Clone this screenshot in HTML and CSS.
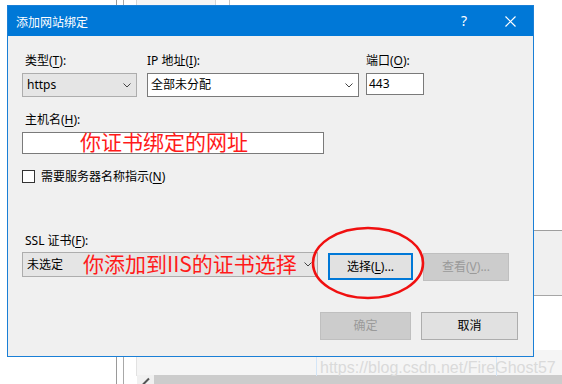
FILE: index.html
```html
<!DOCTYPE html>
<html lang="zh-CN">
<head>
<meta charset="utf-8">
<title>添加网站绑定</title>
<link rel="stylesheet" href="styles.css">
</head>
<body>
<div class="desk">
  <div class="bg-vline bg-v1"></div>
  <div class="bg-vline bg-v2"></div>
  <div class="bg-topbox"></div>
  <div class="bg-vline bg-v3"></div>
  <div class="bg-rightpanel"></div>
  <div class="bg-bottompanel"></div>
  <div class="bg-bottombar">
    <span class="pencil"><svg width="8" height="8" viewBox="0 0 8 8"><path d="M1 7.5 L7 1.5" stroke="#555" stroke-width="2" fill="none"/></svg></span>
    <span class="bar-fill"></span>
  </div>
  <div class="bg-sel bg-sel1"></div>
  <div class="bg-sel bg-sel2"></div>

  <section class="dialog">
    <header class="titlebar">
      <span class="title">添加网站绑定</span>
      <span class="tb-btn help">?</span>
      <span class="tb-btn close"><svg width="11" height="11" viewBox="0 0 11 11"><path d="M0.5 0.5 L10.5 10.5 M10.5 0.5 L0.5 10.5" stroke="#fff" stroke-width="1.2" fill="none"/></svg></span>
    </header>

    <div class="content">
      <div class="row-top">
        <div class="field f-type">
          <span class="lbl indent">类型(<u>T</u>):</span>
          <div class="select dropdown w-type"><span class="val">https</span><svg class="chev" width="8" height="5" viewBox="0 0 8 5"><path d="M0.5 0.5 L4 4 L7.5 0.5" stroke="#444" stroke-width="1" fill="none"/></svg></div>
        </div>
        <div class="field f-ip">
          <span class="lbl">IP 地址(<u>I</u>):</span>
          <div class="select combo w-ip"><span class="val">全部未分配</span><svg class="chev" width="8" height="5" viewBox="0 0 8 5"><path d="M0.5 0.5 L4 4 L7.5 0.5" stroke="#444" stroke-width="1" fill="none"/></svg></div>
        </div>
        <div class="field f-port">
          <span class="lbl">端口(<u>O</u>):</span>
          <div class="textbox w-port">443</div>
        </div>
      </div>

      <div class="field f-host">
        <span class="lbl indent">主机名(<u>H</u>):</span>
        <div class="textbox w-host"></div>
      </div>

      <div class="check-row">
        <span class="checkbox"></span>
        <span class="check-label">需要服务器名称指示(<u>N</u>)</span>
      </div>

      <div class="field f-ssl">
        <span class="lbl indent ssl-lbl">SSL 证书(<u>F</u>):</span>
        <div class="ssl-row">
          <div class="select dropdown w-ssl"><span class="val">未选定</span><svg class="chev" width="8" height="5" viewBox="0 0 8 5"><path d="M0.5 0.5 L4 4 L7.5 0.5" stroke="#444" stroke-width="1" fill="none"/></svg></div>
          <button class="btn btn-focus w-choose">选择(<u>L</u>)...</button>
          <button class="btn btn-disabled w-view">查看(<u>V</u>)...</button>
        </div>
      </div>

      <div class="footer">
        <button class="btn btn-disabled w-ok">确定</button>
        <button class="btn w-cancel">取消</button>
      </div>
    </div>

    <svg class="ring" width="116" height="76" viewBox="0 0 116 76"><ellipse cx="58" cy="38" rx="55" ry="35" stroke="#f01010" stroke-width="2.6" fill="none"/></svg>
    <span class="note note-host">你证书绑定的网址</span>
    <span class="note note-ssl">你添加到IIS的证书选择</span>
  </section>

  <div class="watermark">https://blog.csdn.net/FireGhost57</div>
</div>
</body>
</html>
```

FILE: styles.css
```css
* { box-sizing: border-box; }

html, body {
  margin: 0;
  padding: 0;
  background: #ffffff;
}

body {
  width: 562px;
  height: 384px;
  overflow: hidden;
  font-family: "Noto Sans", "Noto Sans CJK SC", sans-serif;
  font-size: 12px;
  color: #000;
}

.desk {
  position: relative;
  width: 562px;
  height: 384px;
  background: #fff;
  overflow: hidden;
}

/* background application pieces behind the dialog */
.bg-vline {
  position: absolute;
  top: 0;
  width: 1px;
  height: 384px;
  background: #9a9a9a;
}
.bg-v1 { left: 116px; }
.bg-v2 { left: 123px; background: #a8a8a8; }
.bg-v3 { left: 229px; height: 10px; background: #c4c4c4; }

.bg-topbox {
  position: absolute;
  left: 136px;
  top: 0;
  width: 80px;
  height: 10px;
  background: #f5f5f5;
  border-left: 1px solid #d6d6d6;
  border-right: 1px solid #d6d6d6;
}

.bg-rightpanel {
  position: absolute;
  left: 530px;
  top: 230px;
  width: 40px;
  height: 66px;
  background: #f0f0f0;
  border-top: 1px solid #9e9e9e;
  border-bottom: 1px solid #a6a6a6;
}

.bg-bottompanel {
  position: absolute;
  left: 136px;
  top: 350px;
  width: 430px;
  height: 26px;
  background: #f5f5f5;
  border-left: 1px solid #e2e2e2;
}

.bg-bottombar {
  position: absolute;
  left: 137px;
  top: 375px;
  width: 430px;
  height: 9px;
  display: flex;
  background: #f0f0f0;
}
.pencil {
  width: 17px;
  display: flex;
  align-items: flex-start;
  justify-content: center;
  padding-top: 2px;
}
.bar-fill {
  flex: 1;
  background: #cccccc;
}

.bg-sel {
  position: absolute;
  top: 357px;
  width: 1px;
  height: 19px;
  background: #d3e5f7;
}
.bg-sel1 { left: 316px; }
.bg-sel2 { left: 496px; }

/* dialog window */
.dialog {
  position: absolute;
  left: 7px;
  top: 5px;
  width: 527px;
  height: 352px;
  background: #f0f0f0;
  border: 1px solid #1a7fd6;
  display: flex;
  flex-direction: column;
}

.titlebar {
  height: 30px;
  flex: none;
  background: #0078d7;
  color: #fff;
  display: flex;
  align-items: center;
}
.title {
  flex: 1;
  padding-left: 8px;
  font-family: "Noto Sans CJK SC", sans-serif;
  font-size: 12px;
  letter-spacing: 0;
}
.tb-btn {
  width: 46px;
  height: 30px;
  display: flex;
  align-items: center;
  justify-content: center;
}
.help {
  font-family: "Noto Sans", sans-serif;
  font-size: 14px;
  padding-bottom: 1px;
}

.content {
  flex: 1;
  display: flex;
  flex-direction: column;
  padding: 17px 15px 0 14px;
}

.field {
  display: flex;
  flex-direction: column;
  align-items: flex-start;
}

.lbl {
  line-height: 16px;
  height: 16px;
  margin-bottom: 4px;
  white-space: nowrap;
}
.indent { padding-left: 3px; }
.ssl-lbl { margin-bottom: 3px; }

u { text-decoration-thickness: 1px; text-underline-offset: 2px; }

.row-top {
  display: flex;
  align-items: flex-start;
}
.f-ip { margin-left: 10px; }
.f-port { margin-left: 7px; }

.select {
  height: 24px;
  display: flex;
  align-items: center;
  justify-content: space-between;
  padding: 0 5px 0 4px;
  white-space: nowrap;
}
.dropdown {
  background: #e5e5e5;
  border: 1px solid #adadad;
}
.combo {
  background: #fff;
  border: 1px solid #7a7a7a;
  padding-left: 3px;
  padding-right: 5px;
}
.chev { flex: none; }
.val { line-height: 16px; }

.w-type { width: 115px; }
.w-ip { width: 212px; }
.w-port {
  width: 58px;
  height: 22px;
  padding-left: 2px;
}

.textbox {
  height: 22px;
  background: #fff;
  border: 1px solid #7a7a7a;
  display: flex;
  align-items: center;
  line-height: 16px;
}

.f-host { margin-top: 15px; }
.w-host { width: 302px; }

.check-row {
  margin-top: 16px;
  display: flex;
  align-items: center;
  height: 13px;
}
.checkbox {
  width: 13px;
  height: 13px;
  background: #fff;
  border: 1px solid #333;
  flex: none;
}
.check-label {
  margin-left: 6px;
  line-height: 16px;
}

.f-ssl { margin-top: 50px; }
.ssl-row {
  display: flex;
  align-items: flex-start;
}
.w-ssl {
  width: 296px;
  height: 25px;
  padding-left: 4px;
}

.btn {
  font-family: "Noto Sans", "Noto Sans CJK SC", sans-serif;
  font-size: 12px;
  color: #000;
  background: #e1e1e1;
  border: 1px solid #adadad;
  padding: 0;
  margin: 0;
  height: 28px;
  display: flex;
  align-items: center;
  justify-content: center;
  line-height: 16px;
}
.btn-focus {
  border: 2px solid #0078d7;
}
.btn-disabled {
  background: #cccccc;
  border-color: #bfbfbf;
  color: #9a9a9a;
}
.w-choose {
  width: 85px;
  height: 27px;
  margin-top: 1px;
  margin-left: 10px;
}
.w-view {
  width: 86px;
  margin-top: 1px;
  margin-left: 10px;
}

.footer {
  margin-top: 31px;
  display: flex;
  justify-content: flex-end;
  gap: 10px;
}
.w-ok { width: 91px; }
.w-cancel { width: 97px; }

/* annotations drawn over the dialog */
.ring {
  position: absolute;
  left: 302px;
  top: 219px;
}
.note {
  position: absolute;
  font-family: "Noto Sans CJK SC", sans-serif;
  font-size: 21px;
  line-height: 21px;
  color: #ff1a1a;
  white-space: nowrap;
}
.note-host { left: 72px; top: 125px; }
.note-ssl { left: 75px; top: 247px; }

.watermark {
  position: absolute;
  left: 320px;
  top: 358px;
  font-family: "Liberation Sans", Arial, sans-serif;
  font-size: 16px;
  line-height: 20px;
  color: #dadada;
  white-space: nowrap;
}
```
